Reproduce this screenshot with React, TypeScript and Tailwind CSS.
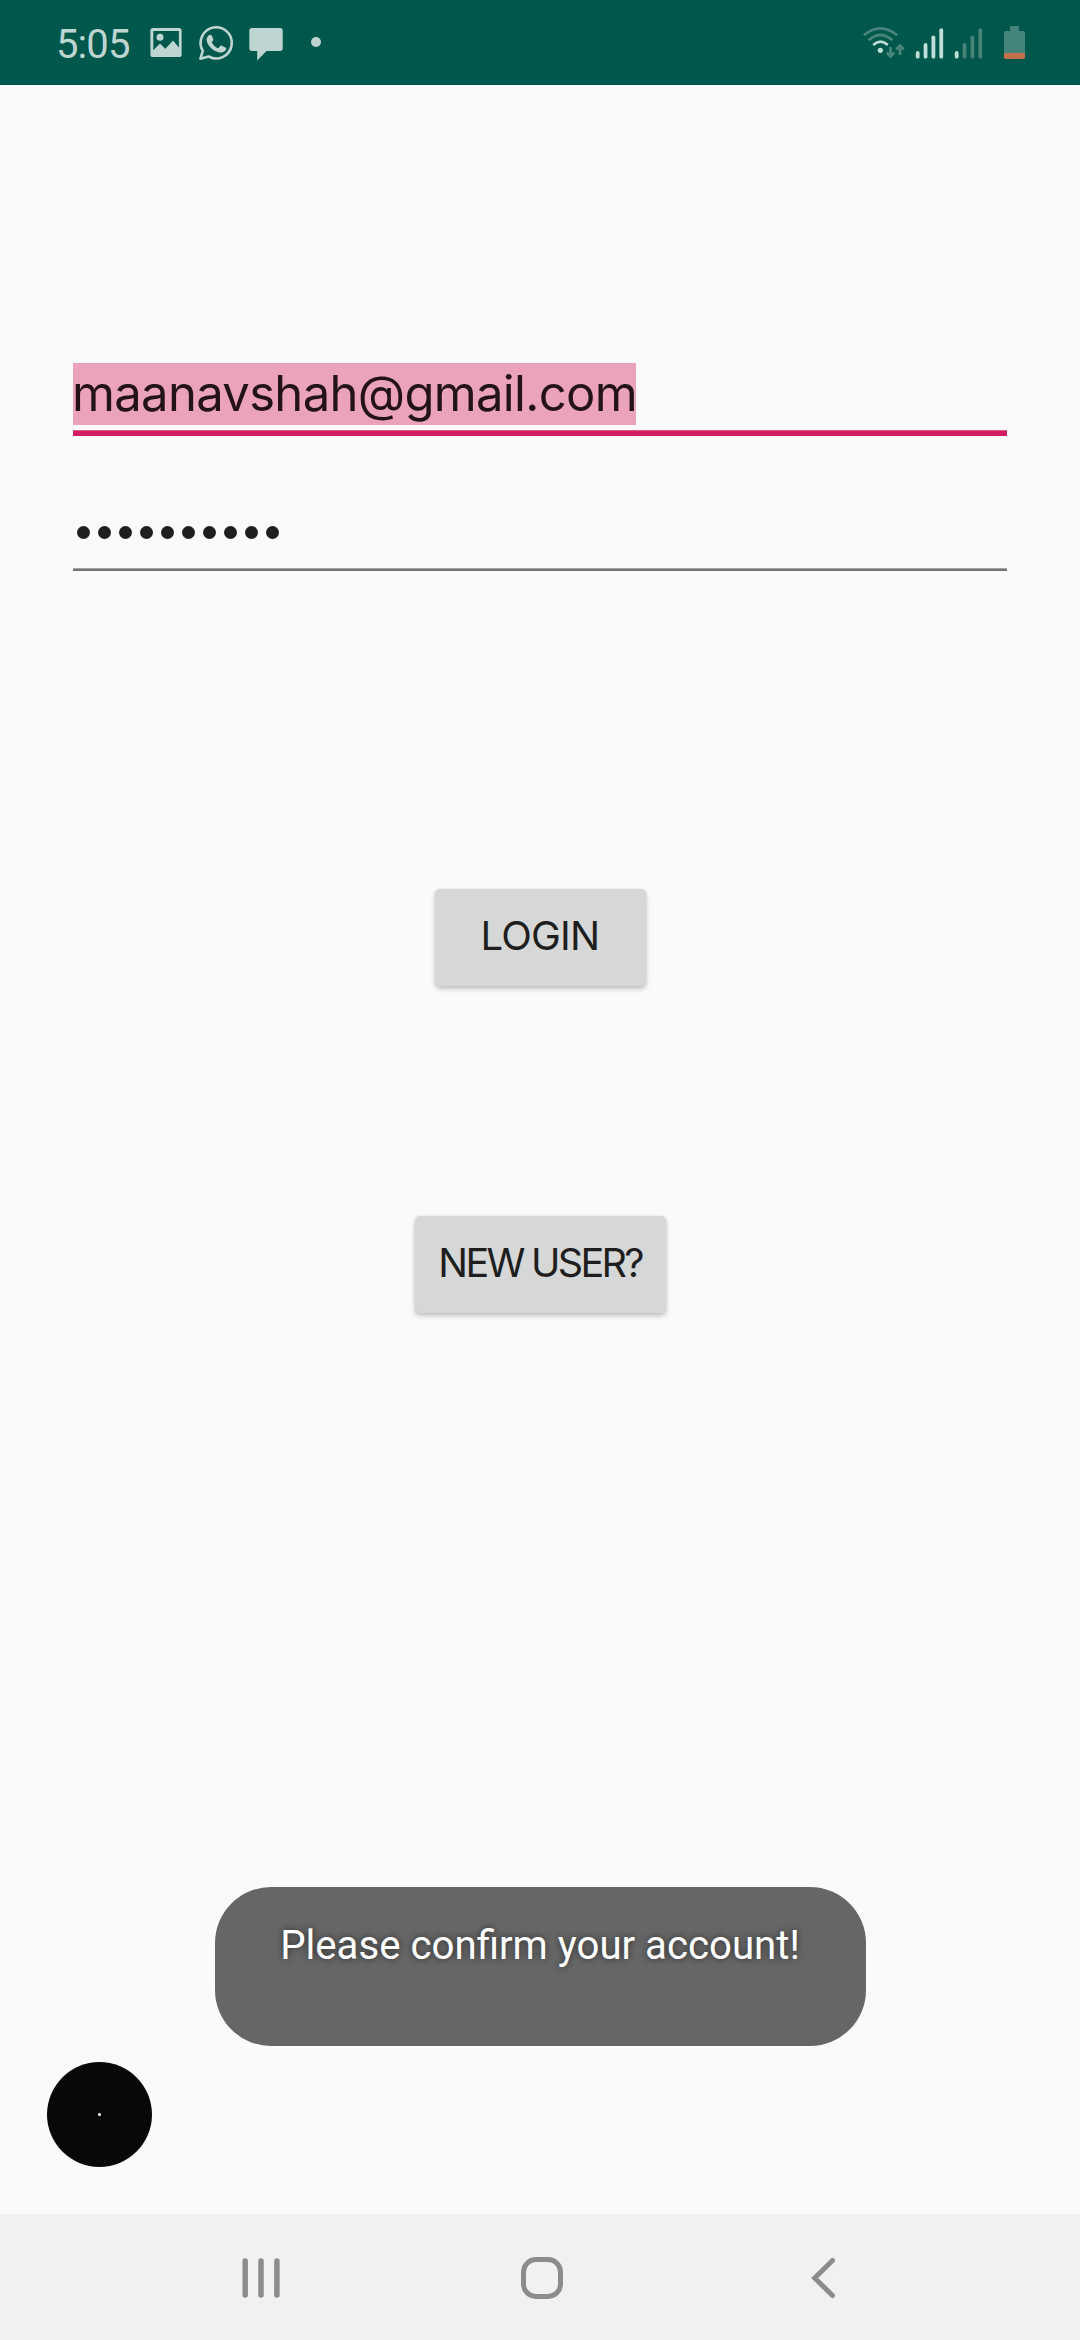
import React from "react";

function StatusBar() {
  return (
    <header className="flex h-[85px] w-full items-start bg-[#00574b] text-[#bfd5d2]">
      <span className="ml-[56px] mt-[21px] w-[91px] whitespace-nowrap font-['Roboto',sans-serif] text-[40px] leading-[47px] tracking-[-0.9px]">
        5:05
      </span>
      <svg className="mt-5 h-11 w-9" viewBox="147 20 36 44" fill="currentColor">
        <path
          fillRule="evenodd"
          d="M153 28h26a2.600 2.600 0 0 1 2.600 2.600v23.800a2.600 2.600 0 0 1-2.600 2.600h-26a2.600 2.600 0 0 1-2.600-2.600V30.600a2.600 2.600 0 0 1 2.600-2.600zM153.300 31v19.300l6.700-6.700 5.400 5.200 7.600-8.200 5.900 7V31z"
        />
        <circle cx="160" cy="37.300" r="3.500" />
      </svg>
      <svg className="ml-3 mt-5 h-11 w-10" viewBox="195 20 40 44" fill="none" stroke="currentColor">
        <path
          strokeWidth="2.600"
          strokeLinejoin="round"
          d="M202.800 50.800A15.600 15.600 0 1 1 208.700 56.500L200.400 58.700z"
        />
        <path
          fill="currentColor"
          stroke="none"
          d="M208.500 35.500c1.500-1.300 2.700-1.100 3.500.6l1.200 3c.4 1-.2 1.900-1.500 3.100 1.700 3.200 3.800 5 6.500 6.100l2-2.300c.5-.6 1-.6 1.700-.3l3.500 1.700c.8.400 1 .9.700 1.700-.8 2.700-3.600 4-6.600 3.300-6.300-1.300-10.800-5.600-12.500-10.400-.7-2.300-.3-4.800 1.500-6.500z"
        />
      </svg>
      <svg className="ml-3 mt-5 h-11 w-10" viewBox="247 20 40 44" fill="currentColor">
        <path d="M252 28h28a2.700 2.700 0 0 1 2.700 2.700v17.600a2.700 2.700 0 0 1-2.700 2.700h-13.500l-9.300 9.500V51H252a2.700 2.700 0 0 1-2.700-2.700V30.700a2.700 2.700 0 0 1 2.700-2.700z" />
      </svg>
      <span className="ml-6 mt-[37px] h-[10px] w-[10px] rounded-full bg-[#bfd5d2]" />
      <div className="ml-auto mr-[52px] mt-5 flex">
        <svg className="h-11 w-12" viewBox="860 20 48 44" fill="none" strokeLinecap="butt">
          <g stroke="#488479" strokeWidth="2.700">
            <path d="M863.800 35.200Q880.500 21.400 897.200 35.200" />
            <path d="M868.500 40.200Q880.500 29.800 892.500 40.200" />
            <path d="M890.500 47v9.500M886.700 52.500l3.800 4 3.800-4M900 55v-9.500M896.200 49.500l3.800-4 3.800 4" />
          </g>
          <path d="M873.200 45Q880.500 38.400 887.800 45" stroke="#bfdfd8" strokeWidth="2.700" />
          <circle cx="880.300" cy="50.300" r="2.600" fill="#bfdfd8" />
        </svg>
        <SignalBars className="ml-1 h-11 w-9" level={4} />
        <SignalBars className="ml-[3px] h-11 w-9" level={1} />
        <svg className="ml-[14px] h-11 w-[27px]" viewBox="1001 20 27 44">
          <path d="M1010 31v-3.800q0-1.200 1.200-1.200h6.600q1.200 0 1.200 1.200V31h4.500q1.500 0 1.500 1.500V53h-21V32.500q0-1.500 1.500-1.500z" fill="#45847a" />
          <path d="M1004 53h21v4.200q0 1.800-1.800 1.800h-17.400q-1.800 0-1.800-1.800z" fill="#c1704b" />
        </svg>
      </div>
    </header>
  );
}

function SignalBars({ className, level }: { className: string; level: number }) {
  const tops = [53, 45, 37.300, 30.200];
  return (
    <svg className={className} viewBox="912 20 36 44" strokeWidth="3.800" strokeLinecap="round">
      {tops.map((top, i) => (
        <path
          key={top}
          d={`M${917.700 + i * 7.850} ${top}V56.700`}
          stroke={i < level ? "#bfdfd8" : "#488479"}
        />
      ))}
    </svg>
  );
}

function LoginForm() {
  return (
    <main className="flex h-[2129px] flex-col items-center font-['Inter',sans-serif] text-[#1e1e1e]">
      <div className="mt-[278px] flex h-[73px] w-[934px] flex-col">
        <div className="h-[62px] w-[563px] bg-[#eba3bd] text-[49px] leading-[61px] text-[#231318]">
          <span className="-ml-[1px] whitespace-nowrap tracking-[-0.68px]">maanavshah@gmail.com</span>
        </div>
        <div className="mt-[5px] h-[6px] w-full border-t border-[#dc5a8a] bg-[#d41c60]" />
      </div>
      <div className="mt-[90px] flex w-[934px] flex-col">
        <div className="ml-1 flex h-[12px] gap-[8.500px]">
          {Array.from({ length: 10 }, (_, i) => (
            <span key={i} className="h-[12.500px] w-[12.500px] rounded-full bg-[#1f1f1f]" />
          ))}
        </div>
        <div className="mt-[30px] h-[3px] w-full border-t border-[#a5a5a5] bg-[#737373]" />
      </div>
      <button className="mt-[318px] h-[97px] w-[211px] rounded-[5px] bg-[#d6d8d7] pb-[3px] text-[40px] leading-[50px] tracking-[-0.8px] shadow-[0_3px_5px_rgba(0,0,0,0.22),0_0_3px_rgba(0,0,0,0.08)]">
        LOGIN
      </button>
      <button className="mt-[230px] h-[97px] w-[251px] whitespace-nowrap rounded-[5px] bg-[#d6d8d7] pb-[3px] text-[39.5px] leading-[50px] tracking-[-2.7px] shadow-[0_3px_5px_rgba(0,0,0,0.22),0_0_3px_rgba(0,0,0,0.08)]">
        NEW USER?
      </button>
      <div className="mt-[574px] flex h-[159px] w-[651px] justify-center rounded-[56px] bg-[#666666] pt-[35px] font-['Roboto',sans-serif] text-[40px] leading-[48px] text-white">
        <span className="whitespace-nowrap text-[40.2px] [text-shadow:0_0_7px_rgba(0,0,0,0.6)]">
          Please confirm your account!
        </span>
      </div>
      <div className="ml-[47px] mt-4 flex h-[105px] w-[105px] items-center justify-center self-start rounded-full bg-[#080808]">
        <span className="h-[3px] w-[3px] rounded-full bg-white" />
      </div>
    </main>
  );
}

function NavigationBar() {
  return (
    <nav className="flex h-[126px] items-start bg-[#f1f1f1] pt-10 text-[#8c8c8c]">
      <svg className="ml-[237px] h-12 w-12" viewBox="237 2254 48 48" fill="none" stroke="currentColor" strokeWidth="5.500" strokeLinecap="round">
        <path d="M245.200 2261v34M261 2261v34M276.900 2261v34" />
      </svg>
      <svg className="ml-[233px] h-12 w-12" viewBox="518 2254 48 48" fill="none" stroke="currentColor" strokeWidth="5">
        <rect x="523.500" y="2259.500" width="37" height="37" rx="12.500" />
      </svg>
      <svg className="ml-[234px] h-12 w-12" viewBox="800 2254 48 48" fill="none" stroke="currentColor" strokeWidth="5" strokeLinecap="round">
        <path d="M832.500 2260.500L814.700 2278l17.800 17.500" />
      </svg>
    </nav>
  );
}

export default function App() {
  return (
    <div className="flex h-[2340px] w-[1080px] flex-col overflow-hidden bg-[#fafafa]">
      <StatusBar />
      <LoginForm />
      <NavigationBar />
    </div>
  );
}
